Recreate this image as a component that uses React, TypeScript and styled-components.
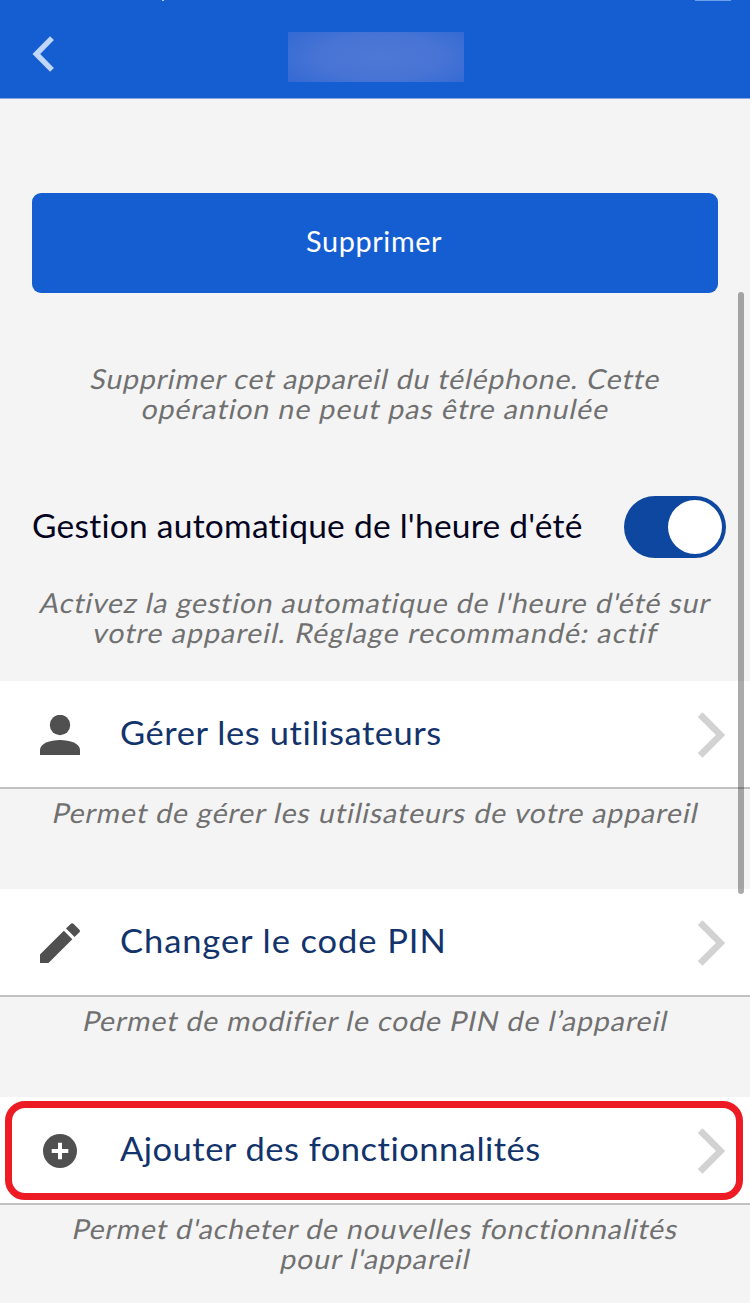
import React from "react";
import styled, { createGlobalStyle } from "styled-components";

const GlobalStyle = createGlobalStyle`
  * { box-sizing: border-box; }
  body { margin: 0; background: #f4f4f4; font-family: Lato, "Open Sans", sans-serif; }
`;

const Screen = styled.main`
  position: relative;
  width: 750px;
  height: 1303px;
  overflow: hidden;
  background: #f4f4f4;
  display: flex;
  flex-direction: column;
`;

const Header = styled.header`
  position: relative;
  flex: none;
  height: 99px;
  padding: 16px 32px 0;
  background: #155ed1;
  border-bottom: 1px solid #8aa6da;
  display: grid;
  grid-template-columns: 256px 176px 1fr;
  align-items: center;
`;

const BackIcon = styled.svg`
  width: 24px;
  height: 36px;
  margin-top: -7px;
`;

const HiddenTitle = styled.div`
  width: 176px;
  height: 50px;
  background: radial-gradient(ellipse 75% 95% at 52% 50%, #4e78d5 0%, #4874d5 45%, #2c66d3 100%);
`;

const StatusFragment = styled.i<{ $left: number; $width: number; $color: string }>`
  position: absolute;
  top: 0;
  left: ${(p) => p.$left}px;
  width: ${(p) => p.$width}px;
  height: 1px;
  background: ${(p) => p.$color};
`;

const DeleteButton = styled.button`
  flex: none;
  height: 100px;
  margin: 94px 32px 0;
  padding: 0 1px 4px 0;
  border: 0;
  border-radius: 9px;
  background: #155ed1;
  color: #fff;
  font: 400 28px/34px Lato, sans-serif;

  > span { transform-origin: center; }
`;

const Note = styled.p<{ $top: number; $height: number }>`
  flex: none;
  height: ${(p) => p.$height}px;
  margin: 0;
  padding-top: ${(p) => p.$top}px;
  padding-left: 2px;
  color: #707070;
  font-size: 27.5px;
  line-height: 30px;
  text-align: center;
`;

const Line = styled.span<{ $track: number }>`
  display: block;
  white-space: nowrap;
  letter-spacing: ${(p) => p.$track}px;
  transform: skewX(-12deg) scaleX(1.03);
`;

const Text = styled.span<{ $track: number }>`
  display: inline-block;
  white-space: nowrap;
  letter-spacing: ${(p) => p.$track}px;
  transform: scaleX(1.03);
  transform-origin: left;
`;

const ToggleRow = styled.label`
  flex: none;
  height: 62px;
  padding: 0 24px 0 32px;
  display: flex;
  align-items: center;
  justify-content: space-between;
  color: #04041f;
  font-size: 32.5px;
  line-height: 40px;

  > :first-child { padding-bottom: 2px; }
`;

const Switch = styled.span`
  width: 102px;
  height: 62px;
  padding: 4px;
  border-radius: 31px;
  background: #0d479f;
  display: flex;
  justify-content: flex-end;
`;

const Knob = styled.span`
  width: 54px;
  height: 54px;
  border-radius: 50%;
  background: #fff;
`;

const MenuRow = styled.div`
  position: relative;
  flex: none;
  height: 108px;
  padding: 0 24px 0 40px;
  border-bottom: 2px solid #c2c2c2;
  background: #fff;
  display: grid;
  grid-template-columns: 80px 1fr 30px;
  align-items: center;
  color: #12336b;
  font-size: 33.5px;
  line-height: 40px;

  > span { padding-bottom: 4px; }
`;

const RowIcon = styled.svg`
  width: 40px;
  height: 40px;
  margin-top: 2px;
  fill: #505050;
`;

const Chevron = styled.svg`
  width: 30px;
  height: 48px;
  margin-top: 2px;
`;

const Highlight = styled.div`
  position: absolute;
  left: 5px;
  top: 4px;
  width: 738px;
  height: 99px;
  border: 7px solid #ed1c24;
  border-radius: 20px;
`;

const ScrollThumb = styled.div`
  position: absolute;
  left: 738px;
  top: 292px;
  width: 6px;
  height: 602px;
  border-radius: 3px;
  background: rgba(0, 0, 0, 0.33);
`;

type Copy = { text: string; track: number };

const Paragraph = ({ lines, top, height }: { lines: Copy[]; top: number; height: number }) => (
  <Note $top={top} $height={height}>
    {lines.map((l) => (
      <Line key={l.text} $track={l.track}>{l.text}</Line>
    ))}
  </Note>
);

const icons = {
  user: (
    <>
      <circle cx="20" cy="10" r="10.2" />
      <path d="M0 40v-5c0-6.500 10-10 20-10s20 3.500 20 10v5z" />
    </>
  ),
  pencil: (
    <>
      <path d="M0 31.600 23.800 7.700 32.300 16.200 8.500 40H0z" />
      <path d="M26 5.500 30.600.900a2.200 2.200 0 0 1 3.100 0l5.500 5.500a2.200 2.200 0 0 1 0 3.100L34.600 14.100z" />
    </>
  ),
  plus: (
    <>
      <circle cx="20" cy="20" r="17" />
      <path d="M20 11.700v16.600M11.700 20h16.600" stroke="#fff" strokeWidth="4" />
    </>
  ),
};

const MenuItem = ({ icon, label, active }: { icon: keyof typeof icons; label: Copy; active?: boolean }) => (
  <MenuRow>
    <RowIcon viewBox="0 0 40 40">{icons[icon]}</RowIcon>
    <Text $track={label.track}>{label.text}</Text>
    <Chevron viewBox="0 0 30 48" fill="none" stroke="#d2d2d2" strokeWidth="6.600">
      <path d="M4.200 3.700 24.500 24 4.200 44.300" />
    </Chevron>
    {active && <Highlight />}
  </MenuRow>
);

export default function App() {
  return (
    <Screen>
      <GlobalStyle />
      <Header>
        <StatusFragment $left={162} $width={2} $color="#b5d0f5" />
        <StatusFragment $left={695} $width={36} $color="#6b9fee" />
        <BackIcon viewBox="0 0 24 36" fill="none" stroke="#c0d6fb" strokeWidth="5.400">
          <path d="M20 2.200 4.300 18 20 33.800" />
        </BackIcon>
        <HiddenTitle />
      </Header>
      <DeleteButton><Text $track={0.6}>Supprimer</Text></DeleteButton>
      <Paragraph
        top={71}
        height={203}
        lines={[
          { text: "Supprimer cet appareil du téléphone. Cette", track: 0.86 },
          { text: "opération ne peut pas être annulée", track: 0.97 },
        ]}
      />
      <ToggleRow>
        <Text $track={0.26}>Gestion automatique de l'heure d'été</Text>
        <Switch><Knob /></Switch>
      </ToggleRow>
      <Paragraph
        top={30}
        height={123}
        lines={[
          { text: "Activez la gestion automatique de l'heure d'été sur", track: 0.89 },
          { text: "votre appareil. Réglage recommandé: actif", track: 1.1 },
        ]}
      />
      <MenuItem icon="user" label={{ text: "Gérer les utilisateurs", track: 0.55 }} />
      <Paragraph top={9} height={100} lines={[{ text: "Permet de gérer les utilisateurs de votre appareil", track: 0.93 }]} />
      <MenuItem icon="pencil" label={{ text: "Changer le code PIN", track: 0.89 }} />
      <Paragraph top={9} height={100} lines={[{ text: "Permet de modifier le code PIN de l’appareil", track: 0.9 }]} />
      <MenuItem icon="plus" label={{ text: "Ajouter des fonctionnalités", track: 0.48 }} active />
      <Paragraph
        top={9}
        height={98}
        lines={[
          { text: "Permet d'acheter de nouvelles fonctionnalités", track: 0.86 },
          { text: "pour l'appareil", track: 0.98 },
        ]}
      />
      <ScrollThumb />
    </Screen>
  );
}
